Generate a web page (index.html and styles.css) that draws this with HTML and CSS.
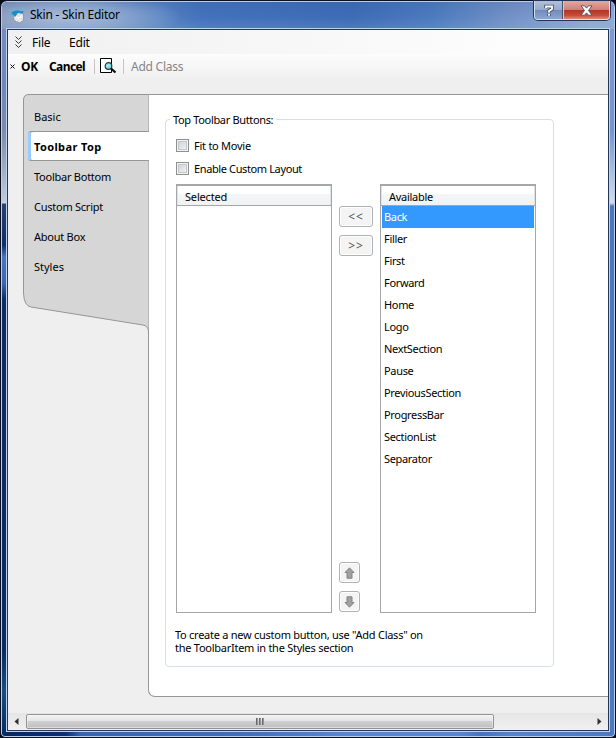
FILE: index.html
```html
<!DOCTYPE html>
<html lang="en">
<head>
<meta charset="utf-8">
<title>Skin - Skin Editor</title>
<link rel="stylesheet" href="styles.css">
</head>
<body>
<div class="window">
  <header class="titlebar">
    <svg class="app-icon" width="16" height="17" viewBox="0 0 16 17">
      <path d="M4 8 9 5l5.500 2v6.500l-4 2.500-5.500-2.500z" fill="#dfe2e5" stroke="#7d8a93" stroke-width=".7"/>
      <path d="M1 7Q4 3 9 3.500l6 1-2 2-4-.5-3 4-2-2.500z" fill="#1c8cc6"/>
      <path d="M.5 2.500l2 1M0 6l3 .5M4.500 1l1 2.500M11 4l3-2.500" stroke="#55bfe6" stroke-width="1.2"/>
      <path d="M7 9l5 5m1-6-6 6m-1-3 8-1" stroke="#fff" stroke-width=".8" fill="none"/>
    </svg>
    <span class="title">Skin - Skin Editor</span>
    <div class="controls">
      <span class="control help"><svg width="10" height="13" viewBox="0 0 10 13"><path d="M2 4V2.5h6V5L5 7v1.500M5 10v2" fill="none" stroke="#4a5468" stroke-width="3.6"/><path d="M2 4V2.5h6V5L5 7v1.500M5 10v1.700" fill="none" stroke="#fff" stroke-width="1.8"/></svg></span>
      <span class="control close"><svg width="13" height="11" viewBox="0 0 13 11"><path d="M1 .8h3.500l2 2.300 2-2.300H12L8.500 5.500 12 10.200H8.500l-2-2.300-2 2.300H1l3.500-4.700z" fill="#fff" stroke="#585a70"/></svg></span>
    </div>
  </header>
  <main class="client">
    <nav class="menubar">
      <svg class="chevrons" width="7" height="12" viewBox="0 0 7 12"><path d="M.5 .5l3 3 3-3M.5 4.500l3 3 3-3M.5 8.500l3 3 3-3" fill="none" stroke="#222" stroke-width=".9"/></svg>
      <span class="menu-file">File</span><span class="menu-edit">Edit</span>
    </nav>
    <div class="toolbar">
      <svg class="mini-x" width="5" height="5" viewBox="0 0 5 5"><path d="M.5 .5l4 4m0-4-4 4" stroke="#111"/></svg>
      <b class="ok">OK</b><b class="cancel">Cancel</b><i class="divider"></i>
      <svg class="preview" width="17" height="16" viewBox="0 0 17 16"><path d="M.5.5h11v14H.5z" fill="#fff" stroke="#000"/><circle cx="8.500" cy="8" r="3.300" fill="#7fdde6" stroke="#333" stroke-width="1.200"/><path d="M6.800 8.500l2-2" stroke="#fff"/><path d="M11 10.500l4.500 4" stroke="#111" stroke-width="2.300"/></svg>
      <i class="divider second"></i><span class="add-class">Add Class</span>
    </div>
    <div class="workspace">
      <aside class="sidebar">
        <svg class="sidebar-shape" width="126" height="240" viewBox="0 0 126 240"><path d="M125.500 .5H6Q.5.500 .5 6V199Q1 212 8 213L120 231Q125.500 232 125.500 238" fill="#d6d6d6" stroke="#969696"/></svg>
        <div class="tab basic">Basic</div>
        <div class="tab active">Toolbar Top</div>
        <div class="tab">Toolbar Bottom</div>
        <div class="tab">Custom Script</div>
        <div class="tab">About Box</div>
        <div class="tab basic">Styles</div>
      </aside>
      <section class="panel">
        <fieldset class="group">
          <legend>Top Toolbar Buttons:</legend>
          <div class="check fit"><i class="box"></i><span>Fit to Movie</span></div>
          <div class="check custom"><i class="box"></i><span>Enable Custom Layout</span></div>
          <div class="lists">
            <div class="list"><div class="list-head">Selected</div></div>
            <div class="actions">
              <span class="button">&lt;&lt;</span>
              <span class="button">&gt;&gt;</span>
              <span class="button arrow up"><svg width="11" height="12" viewBox="0 0 11 12"><path d="M5.500 .8 10 5.500H8v5.700H3V5.500H1z" fill="#a0a0a0" stroke="#858585"/></svg></span>
              <span class="button arrow"><svg width="11" height="12" viewBox="0 0 11 12"><path d="M5.500 11.200 10 6.500H8V.8H3v5.700H1z" fill="#a0a0a0" stroke="#858585"/></svg></span>
            </div>
            <div class="list"><div class="list-head available">Available</div>
              <div class="row current">Back</div><div class="row">Filler</div><div class="row">First</div><div class="row">Forward</div><div class="row">Home</div><div class="row">Logo</div><div class="row">NextSection</div><div class="row">Pause</div><div class="row">PreviousSection</div><div class="row">ProgressBar</div><div class="row">SectionList</div><div class="row">Separator</div>
            </div>
          </div>
          <p class="note">To create a new custom button, use "Add Class" on<br>the ToolbarItem in the Styles section</p>
        </fieldset>
      </section>
    </div>
    <div class="scrollbar">
      <svg class="scroll-arrow" width="5" height="7" viewBox="0 0 5 7"><path d="M4.500 0v7L.5 3.500z" fill="#333"/></svg>
      <div class="thumb"><i></i><i></i><i></i></div>
      <svg class="scroll-arrow right" width="5" height="7" viewBox="0 0 5 7"><path d="M.5 0v7l4-3.500z" fill="#333"/></svg>
    </div>
  </main>
</div>
</body>
</html>
```
FILE: styles.css
```css
* { box-sizing: border-box; }
body { margin: 0; background: #080b18; font: 11px/13px "Noto Sans", sans-serif; color: #000; white-space: nowrap; overflow: hidden; }
svg { display: block; flex: none; }
.window {
  width: 616px; height: 738px; padding: 0 6px 6px; border: 1px solid #0b1024; border-radius: 7px 7px 5px 5px;
  box-shadow: inset 0 0 0 1px #b8cdea;
  background:
    linear-gradient(#7a8fbd 0, #7187b5 85px, #7c8cab 130px, #c3c9d8 200px, #d3d7e2 202px, #2a406f 203px, #122e66 244px, #4975be 256px, #3e68b1 282px, #0c2e65 298px, #0a2c62 650px, #174f83 690px, #07275f 738px) left / 7px 100% no-repeat,
    linear-gradient(#829cce 0, #7595ce 130px, #b8c9e7 180px, #d1dcef 202px, #4b78bc 205px, #4d7abf 100%) right / 8px 100% no-repeat,
    linear-gradient(90deg, #07275f 0, #0d326f 65px, #3766aa 80px, #416fb6 240px, #5887cb 340px, #5887cb 460px, #4674ba 480px, #5684c9 510px, #4d7abf 100%) bottom / 100% 8px no-repeat,
    #4b76bb;
}
.titlebar {
  position: relative; height: 27px; margin: 1px -5px 0; padding-left: 7px; display: flex; align-items: flex-start; border-radius: 5px 5px 0 0;
  background: radial-gradient(ellipse 115px 24px at 65px 15px, rgba(195,210,233,.7) 0, rgba(175,195,225,.5) 50%, transparent 100%), linear-gradient(rgba(20,60,130,.12), transparent 60%, rgba(160,195,240,.15)), linear-gradient(90deg, #7486ab 0, #6686b8 90px, #5681c1 160px, #4473bd 200px, #3e6db7 350px, #4d7bbf 430px, #7090c6 500px, #90a9d5 590px);
}
.app-icon { margin-top: 5px; }
.title { margin: 5px 0 0 5px; font: 12px/16px "Noto Sans", sans-serif; letter-spacing: -.23px; }
.controls { position: absolute; right: 4px; top: -1px; display: flex; width: 76px; height: 19px; border: 1px solid #d4def0; border-top: 0; border-radius: 0 0 4px 4px; box-shadow: 0 0 0 1px #25365a; overflow: hidden; }
.control { display: flex; align-items: center; justify-content: center; }
.help { width: 28px; background: linear-gradient(#b0bfdc 0, #98a9cc 49%, #7189b8 50%, #8ba7d4); border-right: 1px solid #46516a; }
.close { flex: 1; background: linear-gradient(#e0a8a0 0, #cf8278 48%, #b33322 50%, #c64c38 80%, #dc8f78); box-shadow: inset 1px 0 #e7c3c1; }
.client { width: 602px; height: 702px; border: 1px solid #253858; background: #efefef; box-shadow: 0 0 0 1px #bdd2eb; display: flex; flex-direction: column; position: relative; }
.menubar { height: 24px; display: flex; align-items: center; padding-left: 7px; background: linear-gradient(90deg, #f0f0f0, #fcfcfc 80%, #fdfdfd); font-size: 12px; }
.menu-file { margin-left: 10px; width: 37px; letter-spacing: -.2px; }
.menu-edit { letter-spacing: -.2px; }
.toolbar { height: 34px; padding: 0 0 10px 2px; display: flex; align-items: center; background: linear-gradient(#fdfdfd 0, #efefef 26px); font-size: 12px; }
.ok { width: 28px; margin-left: 6px; letter-spacing: -.3px; }
.cancel { width: 45px; letter-spacing: -.6px; }
.divider { width: 1px; height: 15px; background: #c4c4c4; }
.preview { margin-left: 5px; }
.second { margin-left: 6px; }
.add-class { margin-left: 7px; color: #858585; letter-spacing: -.25px; }
.workspace { height: 625px; display: flex; padding: 6px 0 19px 15px; }
.sidebar { position: relative; width: 126px; padding-top: 8px; margin-right: -1px; z-index: 1; }
.sidebar-shape { position: absolute; left: 0; top: 0; }
.tab { position: relative; height: 30px; padding: 8px 0 0 11px; letter-spacing: -.25px; }
.tab.basic { letter-spacing: 0; }
.tab.active { margin: -1px 0 1px 5px; padding: 8px 0 0 6px; background: #fff; border: solid #969696; border-width: 1px 0; border-radius: 3px 0 0 3px; font-weight: bold; box-shadow: inset 3px 0 #99ccff; letter-spacing: .38px; }
.panel { flex: 1; height: 603px; padding: 18px 0 0 16px; background: #fff; border: solid #969696; border-width: 1px 0 1px 1px; border-radius: 0 0 0 7px; }
.group { width: 389px; height: 554px; margin: 0; padding: 13px 0 0 10px; border: 1px solid #d5dfe5; border-radius: 4px; min-width: 0; }
.group legend { padding: 0 3px; margin-left: -6px; letter-spacing: -.34px; }
.check { height: 23px; display: flex; align-items: flex-start; }
.check span { margin-left: 5px; letter-spacing: -.25px; }
.box { width: 13px; height: 13px; border: 1px solid #8e8f8f; background: linear-gradient(135deg, #cbcfd5, #f6f6f6); background-clip: content-box; box-shadow: inset 0 0 0 1px #f4f4f4, inset 0 0 0 2px #c3c7cc; }
.check.custom span { letter-spacing: -.38px; }
.lists { display: flex; height: 429px; margin-top: -1px; }
.list { width: 156px; border: 1px solid #a4a6aa; padding: 0 1px; background: #fff; }
.list-head { height: 21px; margin: 0 -1px; padding: 4px 0 0 8px; background: linear-gradient(#fff 0, #fff 40%, #f5f6f7 41%, #f1f2f4); border-top: 1px solid #a4a6aa; border-bottom: 1px solid #a4a6aa; box-shadow: inset 1px 0 #e0e3e6, inset -1px 0 #e0e3e6; letter-spacing: -.18px; }
.available { letter-spacing: -.28px; }
.row { height: 22px; line-height: 22px; padding-left: 2px; letter-spacing: -.33px; }
.current { color: #fff; background: #3399ff; }
.actions { width: 48px; padding: 22px 7px 1px; display: flex; flex-direction: column; }
.button { width: 34px; height: 21px; margin-bottom: 8px; display: flex; align-items: center; justify-content: center; border: 1px solid #adb2b5; border-radius: 3px; background: #f4f4f4; box-shadow: inset 0 0 0 1px #fff; color: #555; font-size: 12px; letter-spacing: .9px; }
.arrow { width: 21px; margin-bottom: 0; }
.up { margin-top: auto; margin-bottom: 8px; }
.note { margin: 15px 0 0 -1px; letter-spacing: -.26px; }
.scrollbar { height: 17px; display: flex; align-items: center; padding-left: 6px; background: linear-gradient(#e6e6e6, #f0f0f0); }
.thumb { width: 468px; height: 15px; margin-left: 7px; border: 1px solid #929292; border-radius: 2px; background: linear-gradient(#f3f3f3 0, #e5e5e5 45%, #cfcfd1 50%, #bebfc2); box-shadow: inset 0 0 0 1px rgba(255,255,255,.45); display: flex; gap: 1px; justify-content: center; align-items: center; }
.thumb i { width: 2px; height: 7px; background: linear-gradient(90deg, #555, #aaa); }
.right { margin-left: auto; margin-right: 6px; }
```
